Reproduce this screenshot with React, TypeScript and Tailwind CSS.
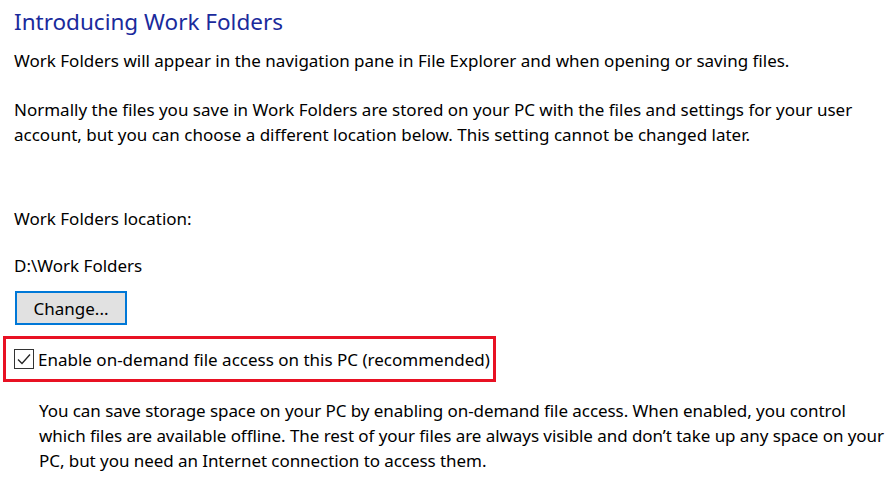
const body = "font-['Segoe_UI','Noto_Sans',sans-serif] text-[17px] leading-[25px] text-black";

const CheckMark = () => (
	<svg width="14" height="12" viewBox="0 0 14 12" fill="none">
		<path d="M1 6.5 L5 10.5 L13 1.5" stroke="#222" strokeWidth="1.3" />
	</svg>
);

const App = () => {
	return (
		<div className="w-[894px] h-[487px] bg-white overflow-hidden">
			<h1 className="ml-[14px] mt-[6px] font-['Segoe_UI','Noto_Sans',sans-serif] text-[22.5px] leading-[32px] text-[#1a2a9c] font-normal">
				Introducing Work Folders
			</h1>
			<p className={`${body} ml-[14px] mt-[10px] whitespace-nowrap`}>
				Work Folders will appear in the navigation pane in File Explorer and when opening or saving files.
			</p>
			<p className={`${body} ml-[14px] mt-[24px] whitespace-nowrap`}>
				Normally the files you save in Work Folders are stored on your PC with the files and settings for your user
				<br />
				account, but you can choose a different location below. This setting cannot be changed later.
			</p>
			<p className={`${body} ml-[14px] mt-[59px]`}>Work Folders location:</p>
			<p className={`${body} ml-[14px] mt-[22px]`}>D:\Work Folders</p>
			<button className={`${body} ml-[15px] mt-[13px] w-[112px] h-[34px] bg-[#e1e1e1] border-2 border-[#0078d7] flex items-center justify-center`}>
				Change...
			</button>
			<div className="ml-[3px] mt-[11px] w-[493px] h-[46px] border-[3px] border-[#e81123] flex items-center pl-[8px] gap-[4px]">
				<div className="w-[20px] h-[20px] border border-[#333] flex items-center justify-center bg-white">
					<CheckMark />
				</div>
				<span className={`${body} whitespace-nowrap`}>Enable on-demand file access on this PC (recommended)</span>
			</div>
			<p className={`${body} ml-[39px] mt-[16px] whitespace-nowrap tracking-[-0.06px]`}>
				You can save storage space on your PC by enabling on-demand file access. When enabled, you control
				<br />
				which files are available offline. The rest of your files are always visible and don’t take up any space on your
				<br />
				PC, but you need an Internet connection to access them.
			</p>
		</div>
	);
};

export default App;
